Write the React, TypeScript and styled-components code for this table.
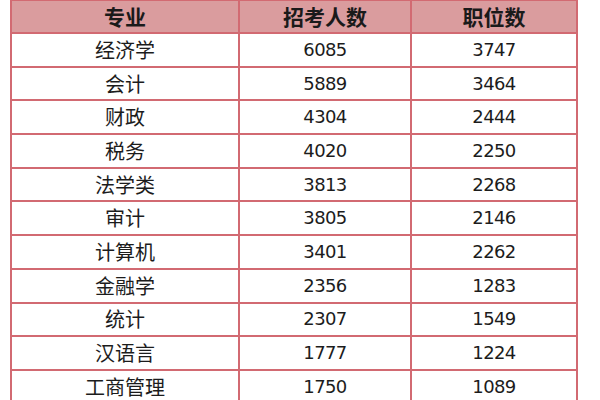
import React from "react";
import styled, { createGlobalStyle } from "styled-components";

const Global = createGlobalStyle`
  html, body { margin: 0; padding: 0; background: #ffffff; }
  body { font-family: "Noto Sans CJK SC", "Liberation Sans", sans-serif; overflow: hidden; }
`;

const Page = styled.div`
  width: 600px;
  height: 400px;
  overflow: hidden;
  padding-left: 10px;
  box-sizing: border-box;
`;

const Table = styled.table`
  border-collapse: collapse;
  table-layout: fixed;
  width: 566px;
  margin-top: -1px;
`;

const Col = styled.col<{ $w: number }>`
  width: ${(p) => p.$w}px;
`;

const HeadCell = styled.th`
  background: #da9c9e;
  border: 2px solid #d26a72;
  height: 31px;
  padding: 0;
  font-family: "Noto Sans CJK SC", sans-serif;
  font-weight: 700;
  font-size: 21px;
  color: #1a1a1a;
  text-align: center;
  vertical-align: middle;
  line-height: 1;
`;

const Cell = styled.td<{ $num?: boolean }>`
  border: 2px solid #d26a72;
  height: 31.7px;
  padding: 0;
  text-align: center;
  vertical-align: middle;
  line-height: 1;
  color: #1c1c1c;
  font-family: ${(p) =>
    p.$num ? '"DejaVu Sans", "Liberation Sans", sans-serif' : '"Noto Sans CJK SC", sans-serif'};
  font-size: ${(p) => (p.$num ? "18px" : "20px")};
  letter-spacing: ${(p) => (p.$num ? "-0.6px" : "0")};
  font-weight: 400;
`;

const rows: [string, string, string][] = [
  ["经济学", "6085", "3747"],
  ["会计", "5889", "3464"],
  ["财政", "4304", "2444"],
  ["税务", "4020", "2250"],
  ["法学类", "3813", "2268"],
  ["审计", "3805", "2146"],
  ["计算机", "3401", "2262"],
  ["金融学", "2356", "1283"],
  ["统计", "2307", "1549"],
  ["汉语言", "1777", "1224"],
  ["工商管理", "1750", "1089"],
];

export default function App() {
  return (
    <Page>
      <Global />
      <Table>
        <colgroup>
          <Col $w={228} />
          <Col $w={172} />
          <Col $w={166} />
        </colgroup>
        <thead>
          <tr>
            <HeadCell>专业</HeadCell>
            <HeadCell>招考人数</HeadCell>
            <HeadCell>职位数</HeadCell>
          </tr>
        </thead>
        <tbody>
          {rows.map(([name, a, b]) => (
            <tr key={name}>
              <Cell>{name}</Cell>
              <Cell $num>{a}</Cell>
              <Cell $num>{b}</Cell>
            </tr>
          ))}
        </tbody>
      </Table>
    </Page>
  );
}
